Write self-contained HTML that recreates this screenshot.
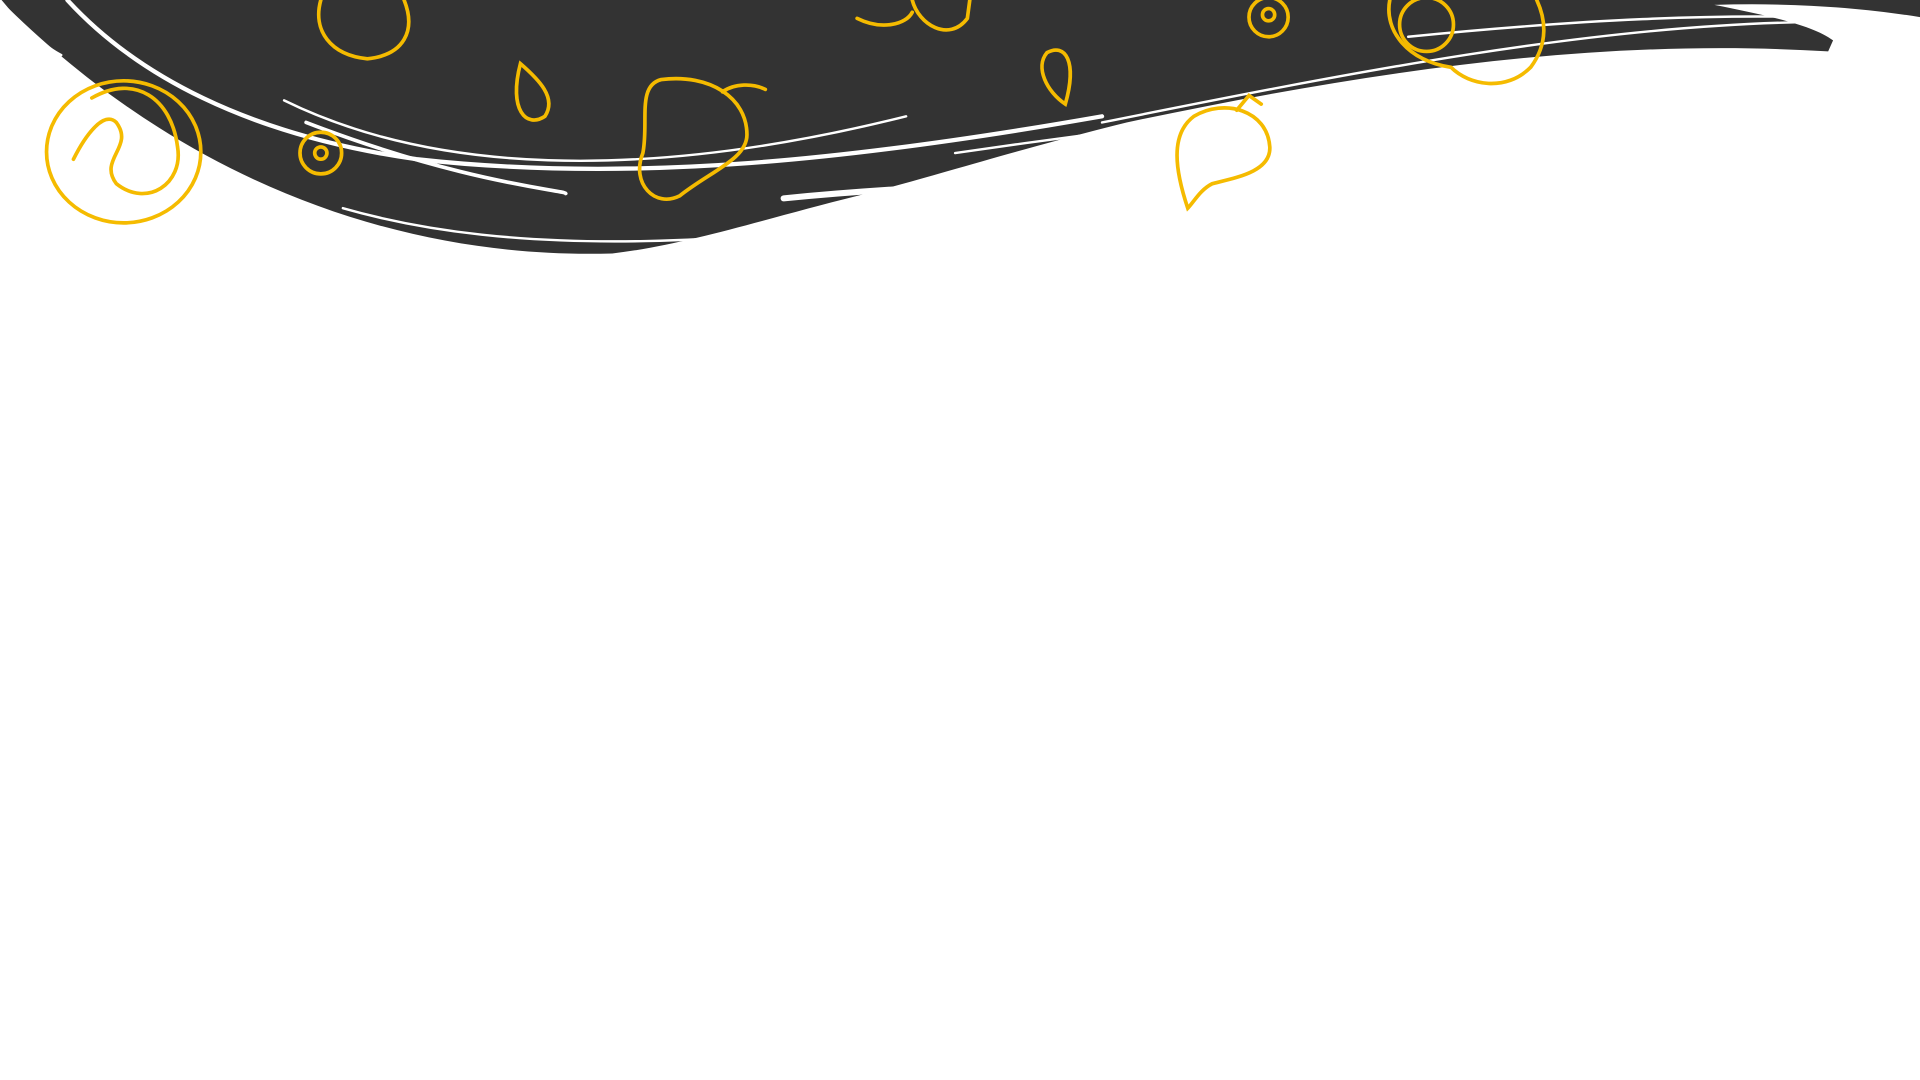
<!DOCTYPE html>
<html><head><meta charset="utf-8"><style>
html,body{margin:0;padding:0;width:1920px;height:1080px;overflow:hidden;background:#fff}
svg{display:block}
</style></head><body>
<svg width="1920" height="1080" viewBox="0 0 1568 882" preserveAspectRatio="none">
<path d="M0,0 H1568 V14 C1520,6 1460,2 1400,4 C1440,12 1480,20 1497,33 L1493,42 C1300,30 1110,60 920,100 C820,125 760,145 700,160 C620,180 560,200 500,207 C330,212 150,150 0,0 Z" fill="#333333"/>
<g fill="none" stroke="#fff" stroke-linecap="round">
<path d="M55,0 C110,60 200,110 340,130 C520,150 700,130 900,95" stroke-width="3.5"/>
<path d="M232,82 C350,140 520,150 740,95" stroke-width="2"/>
<path d="M250,100 C380,150 460,155 462,158" stroke-width="3"/>
<path d="M640,162 C760,150 860,150 920,145" stroke-width="5"/>
<path d="M280,170 C420,210 600,205 880,160" stroke-width="2"/>
<path d="M0,0 C20,25 40,40 50,45" stroke-width="2"/>
<path d="M900,100 C1100,60 1300,20 1480,18" stroke-width="2"/>
<path d="M1150,30 C1300,15 1400,12 1480,14" stroke-width="2"/>
<path d="M780,125 C850,115 900,108 1000,95" stroke-width="2"/>
</g>
<g fill="none" stroke="#f5bb00" stroke-width="3" stroke-linecap="round">
<ellipse cx="101" cy="124" rx="63" ry="58"/>
<path d="M75,80 C110,60 140,80 145,120 C150,150 120,170 95,150 C80,130 110,120 95,100 C85,90 70,110 60,130"/>
<circle cx="262" cy="125" r="17"/><circle cx="262" cy="125" r="5"/>
<path d="M262,0 C255,25 270,45 300,48 C330,45 340,25 330,0"/>
<path d="M425,52 C440,65 455,80 445,95 C430,105 415,90 425,52 Z"/>
<path d="M540,65 C580,60 610,80 610,110 C610,130 580,140 555,160 C535,170 515,150 525,125 C530,100 520,70 540,65 Z"/>
<path d="M590,75 C600,68 615,68 625,73"/>
<path d="M700,15 C720,25 740,20 745,10 M745,0 C750,20 775,35 790,15 L792,0"/>
<path d="M870,85 C855,75 845,55 855,43 C870,35 880,50 870,85 Z"/>
<circle cx="1036" cy="14" r="16"/><circle cx="1036" cy="12" r="5"/>
<path d="M970,170 C960,140 955,110 975,95 C1000,80 1035,90 1037,120 C1038,140 1010,145 990,150 C980,155 975,165 970,170 Z"/>
<path d="M1010,90 L1020,78 L1030,85"/>
<path d="M1135,0 C1130,25 1150,50 1185,55 C1200,70 1230,75 1250,55 C1265,35 1262,15 1255,0"/>
<circle cx="1165" cy="20" r="22"/>
</g>
</svg>
</body></html>
